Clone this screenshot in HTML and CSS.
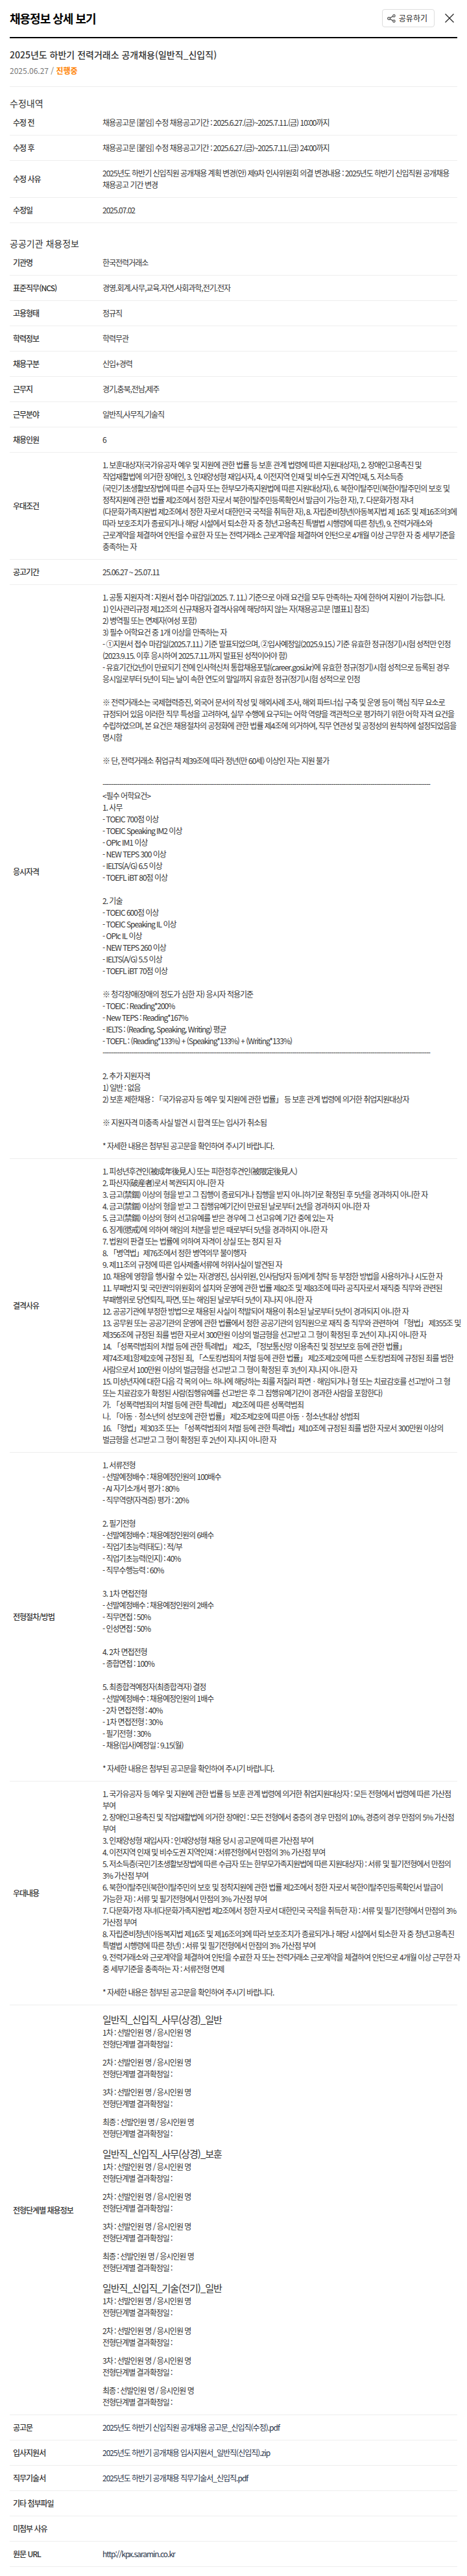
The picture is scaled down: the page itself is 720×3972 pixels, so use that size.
FILE: index.html
```
<!DOCTYPE html>
<html lang="ko">
<head>
    <meta charset="UTF-8">
    <meta name="viewport" content="width=device-width, initial-scale=1.0">
    <title>채용정보 상세 보기</title>
    <link rel="stylesheet" href="styles.css">
</head>
<body>
    <div class="popup">
        <header class="pop-header">
            <h1>채용정보 상세 보기</h1>
            <div class="pop-btns">
                <button type="button" class="btn-share">
                    <svg width="13" height="13" viewBox="0 0 13 13" fill="none" stroke="#555" stroke-width="1.3" aria-hidden="true">
                        <circle cx="2.6" cy="6.5" r="1.9"/>
                        <circle cx="10.4" cy="2.4" r="1.7"/>
                        <circle cx="10.4" cy="10.6" r="1.7"/>
                        <path d="M4.3 5.6L8.9 3.2M4.3 7.4L8.9 9.8"/>
                    </svg>
                    공유하기
                </button>
                <button type="button" class="btn-close" aria-label="닫기">
                    <svg width="14" height="14" viewBox="0 0 14 14" fill="none" stroke="#222" stroke-width="1.3">
                        <path d="M0.5 0.5L13.5 13.5M13.5 0.5L0.5 13.5"/>
                    </svg>
                </button>
            </div>
        </header>

        <div class="job-title">
            <h2>2025년도 하반기 전력거래소 공개채용(일반직_신입직)</h2>
            <p>2025.06.27 / <strong>진행중</strong></p>
        </div>

        <section class="section">
            <h3>수정내역</h3>
            <table class="tbl">
                <tr>
                    <th scope="row">수정 전</th>
                    <td>채용공고문 [붙임] 수정 채용공고기간 : 2025.6.27.(금)~2025.7.11.(금) 10:00까지</td>
                </tr>
                <tr>
                    <th scope="row">수정 후</th>
                    <td>채용공고문 [붙임] 수정 채용공고기간 : 2025.6.27.(금)~2025.7.11.(금) 24:00까지</td>
                </tr>
                <tr>
                    <th scope="row">수정 사유</th>
                    <td>
                        <div class="text">
                        2025년도 하반기 신입직원 공개채용 계획 변경(안) 제9차 인사위원회 의결 변경내용 : 2025년도 하반기 신입직원 공개채용<br>
                        채용공고 기간 변경
                        </div>
                    </td>
                </tr>
                <tr>
                    <th scope="row">수정일</th>
                    <td>2025.07.02</td>
                </tr>
            </table>
        </section>

        <section class="section">
            <h3>공공기관 채용정보</h3>
            <table class="tbl">
                <tr>
                    <th scope="row">기관명</th>
                    <td>한국전력거래소</td>
                </tr>
                <tr>
                    <th scope="row">표준직무(NCS)</th>
                    <td>경영.회계.사무,교육.자연.사회과학,전기.전자</td>
                </tr>
                <tr>
                    <th scope="row">고용형태</th>
                    <td>정규직</td>
                </tr>
                <tr>
                    <th scope="row">학력정보</th>
                    <td>학력무관</td>
                </tr>
                <tr>
                    <th scope="row">채용구분</th>
                    <td>신입+경력</td>
                </tr>
                <tr>
                    <th scope="row">근무지</th>
                    <td>경기,충북,전남,제주</td>
                </tr>
                <tr>
                    <th scope="row">근무분야</th>
                    <td>일반직,사무직,기술직</td>
                </tr>
                <tr>
                    <th scope="row">채용인원</th>
                    <td>6</td>
                </tr>
                <tr>
                    <th scope="row">우대조건</th>
                    <td>
                        <div class="text">
                        1. 보훈대상자(국가유공자 예우 및 지원에 관한 법률 등 보훈 관계 법령에 따른 지원대상자), 2. 장애인고용촉진 및<br>
                        직업재활법에 의거한 장애인, 3. 인재양성형 재입사자, 4. 이전지역 인재 및 비수도권 지역인재, 5. 저소득층<br>
                        (국민기초생활보장법에 따른 수급자 또는 한부모가족지원법에 따른 지원대상자), 6. 북한이탈주민(북한이탈주민의 보호 및<br>
                        정착지원에 관한 법률 제2조에서 정한 자로서 북한이탈주민등록확인서 발급이 가능한 자), 7. 다문화가정 자녀<br>
                        (다문화가족지원법 제2조에서 정한 자로서 대한민국 국적을 취득한 자), 8. 자립준비청년(아동복지법 제 16조 및 제16조의3에<br>
                        따라 보호조치가 종료되거나 해당 시설에서 퇴소한 자 중 청년고용촉진 특별법 시행령에 따른 청년), 9. 전력거래소와<br>
                        근로계약을 체결하여 인턴을 수료한 자 또는 전력거래소 근로계약을 체결하여 인턴으로 4개월 이상 근무한 자 중 세부기준을<br>
                        충족하는 자
                        </div>
                    </td>
                </tr>
                <tr>
                    <th scope="row">공고기간</th>
                    <td>25.06.27 ~ 25.07.11</td>
                </tr>
                <tr>
                    <th scope="row">응시자격</th>
                    <td>
                        <div class="text">
                        1. 공통 지원자격 : 지원서 접수 마감일(2025. 7. 11.) 기준으로 아래 요건을 모두 만족하는 자에 한하여 지원이 가능합니다.<br>
                        1) 인사관리규정 제12조의 신규채용자 결격사유에 해당하지 않는 자(채용공고문 [별표1] 참조)<br>
                        2) 병역필 또는 면제자(여성 포함)<br>
                        3) 필수 어학요건 중 1개 이상을 만족하는 자<br>
                        - ①지원서 접수 마감일(2025.7.11.) 기준 발표되었으며, ②입사예정일(2025.9.15.) 기준 유효한 정규(정기)시험 성적만 인정<br>
                        (2023.9.15. 이후 응시하여 2025.7.11.까지 발표된 성적이어야 함)<br>
                        - 유효기간(2년)이 만료되기 전에 인사혁신처 통합채용포털(career.gosi.kr)에 유효한 정규(정기)시험 성적으로 등록된 경우<br>
                        응시일로부터 5년이 되는 날이 속한 연도의 말일까지 유효한 정규(정기)시험 성적으로 인정<br>
                        <br>
                        ※ 전력거래소는 국제협력증진, 외국어 문서의 작성 및 해외사례 조사, 해외 파트너십 구축 및 운영 등이 핵심 직무 요소로<br>
                        규정되어 있음 이러한 직무 특성을 고려하여, 실무 수행에 요구되는 어학 역량을 객관적으로 평가하기 위한 어학 자격 요건을<br>
                        수립하였으며, 본 요건은 채용절차의 공정화에 관한 법률 제4조에 의거하여, 직무 연관성 및 공정성의 원칙하에 설정되었음을<br>
                        명시함<br>
                        <br>
                        ※ 단, 전력거래소 취업규칙 제39조에 따라 정년(만 60세) 이상인 자는 지원 불가<br>
                        <br>
                        ---------------------------------------------------------------------------------------------------------------------------------------------------------------<br>
                        &lt;필수 어학요건&gt;<br>
                        1. 사무<br>
                        - TOEIC 700점 이상<br>
                        - TOEIC Speaking IM2 이상<br>
                        - OPIc IM1 이상<br>
                        - NEW TEPS 300 이상<br>
                        - IELTS(A/G) 6.5 이상<br>
                        - TOEFL iBT 80점 이상<br>
                        <br>
                        2. 기술<br>
                        - TOEIC 600점 이상<br>
                        - TOEIC Speaking IL 이상<br>
                        - OPIc IL 이상<br>
                        - NEW TEPS 260 이상<br>
                        - IELTS(A/G) 5.5 이상<br>
                        - TOEFL iBT 70점 이상<br>
                        <br>
                        ※ 청각장애(장애의 정도가 심한 자) 응시자 적용기준<br>
                        - TOEIC : Reading*200%<br>
                        - New TEPS : Reading*167%<br>
                        - IELTS : (Reading, Speaking, Writing) 평균<br>
                        - TOEFL : (Reading*133%) + (Speaking*133%) + (Writing*133%)<br>
                        ---------------------------------------------------------------------------------------------------------------------------------------------------------------<br>
                        <br>
                        2. 추가 지원자격<br>
                        1) 일반 : 없음<br>
                        2) 보훈 제한채용 : 「국가유공자 등 예우 및 지원에 관한 법률」 등 보훈 관계 법령에 의거한 취업지원대상자<br>
                        <br>
                        ※ 지원자격 미충족 사실 발견 시 합격 또는 입사가 취소됨<br>
                        <br>
                        * 자세한 내용은 첨부된 공고문을 확인하여 주시기 바랍니다.
                        </div>
                    </td>
                </tr>
                <tr>
                    <th scope="row">결격사유</th>
                    <td>
                        <div class="text">
                        1. 피성년후견인(被成年後見人) 또는 피한정후견인(被限定後見人)<br>
                        2. 파산자(破産者)로서 복권되지 아니한 자<br>
                        3. 금고(禁錮) 이상의 형을 받고 그 집행이 종료되거나 집행을 받지 아니하기로 확정된 후 5년을 경과하지 아니한 자<br>
                        4. 금고(禁錮) 이상의 형을 받고 그 집행유예기간이 만료된 날로부터 2년을 경과하지 아니한 자<br>
                        5. 금고(禁錮) 이상의 형의 선고유예를 받은 경우에 그 선고유예 기간 중에 있는 자<br>
                        6. 징계(懲戒)에 의하여 해임의 처분을 받은 때로부터 5년을 경과하지 아니한 자<br>
                        7. 법원의 판결 또는 법률에 의하여 자격이 상실 또는 정지 된 자<br>
                        8. 「병역법」제76조에서 정한 병역의무 불이행자<br>
                        9. 제11조의 규정에 따른 입사제출서류에 허위사실이 발견된 자<br>
                        10. 채용에 영향을 행사할 수 있는 자(경영진, 심사위원, 인사담당자 등)에게 청탁 등 부정한 방법을 사용하거나 시도한 자<br>
                        11. 부패방지 및 국민권익위원회의 설치와 운영에 관한 법률 제82조 및 제83조에 따라 공직자로서 재직중 직무와 관련된<br>
                        부패행위로 당연퇴직, 파면, 또는 해임된 날로부터 5년이 지나지 아니한 자<br>
                        12. 공공기관에 부정한 방법으로 채용된 사실이 적발되어 채용이 취소된 날로부터 5년이 경과되지 아니한 자<br>
                        13. 공무원 또는 공공기관의 운영에 관한 법률에서 정한 공공기관의 임직원으로 재직 중 직무와 관련하여 「형법」 제355조 및<br>
                        제356조에 규정된 죄를 범한 자로서 300만원 이상의 벌금형을 선고받고 그 형이 확정된 후 2년이 지나지 아니한 자<br>
                        14. 「성폭력범죄의 처벌 등에 관한 특례법」 제2조, 「정보통신망 이용촉진 및 정보보호 등에 관한 법률」<br>
                        제74조제1항제2호에 규정된 죄, 「스토킹범죄의 처벌 등에 관한 법률」 제2조제2호에 따른 스토킹범죄에 규정된 죄를 범한<br>
                        사람으로서 100만원 이상의 벌금형을 선고받고 그 형이 확정된 후 3년이 지나지 아니한 자<br>
                        15. 미성년자에 대한 다음 각 목의 어느 하나에 해당하는 죄를 저질러 파면ㆍ해임되거나 형 또는 치료감호를 선고받아 그 형<br>
                        또는 치료감호가 확정된 사람(집행유예를 선고받은 후 그 집행유예기간이 경과한 사람을 포함한다)<br>
                        가. 「성폭력범죄의 처벌 등에 관한 특례법」 제2조에 따른 성폭력범죄<br>
                        나. 「아동ㆍ청소년의 성보호에 관한 법률」 제2조제2호에 따른 아동ㆍ청소년대상 성범죄<br>
                        16. 「형법」제303조 또는 「성폭력범죄의 처벌 등에 관한 특례법」제10조에 규정된 죄를 범한 자로서 300만원 이상의<br>
                        벌금형을 선고받고 그 형이 확정된 후 2년이 지나지 아니한 자
                        </div>
                    </td>
                </tr>
                <tr>
                    <th scope="row">전형절차/방법</th>
                    <td>
                        1. 서류전형<br>
                        - 선발예정배수 : 채용예정인원의 100배수<br>
                        - AI 자기소개서 평가 : 80%<br>
                        - 직무역량(자격증) 평가 : 20%<br>
                        <br>
                        2. 필기전형<br>
                        - 선발예정배수 : 채용예정인원의 6배수<br>
                        - 직업기초능력(태도) : 적/부<br>
                        - 직업기초능력(인지) : 40%<br>
                        - 직무수행능력 : 60%<br>
                        <br>
                        3. 1차 면접전형<br>
                        - 선발예정배수 : 채용예정인원의 2배수<br>
                        - 직무면접 : 50%<br>
                        - 인성면접 : 50%<br>
                        <br>
                        4. 2차 면접전형<br>
                        - 종합면접 : 100%<br>
                        <br>
                        5. 최종합격예정자(최종합격자) 결정<br>
                        - 선발예정배수 : 채용예정인원의 1배수<br>
                        - 2차 면접전형 : 40%<br>
                        - 1차 면접전형 : 30%<br>
                        - 필기전형 : 30%<br>
                        - 채용(입사)예정일 : 9.15(월)<br>
                        <br>
                        * 자세한 내용은 첨부된 공고문을 확인하여 주시기 바랍니다.
                    </td>
                </tr>
                <tr>
                    <th scope="row">우대내용</th>
                    <td>
                        <div class="text">
                        1. 국가유공자 등 예우 및 지원에 관한 법률 등 보훈 관계 법령에 의거한 취업지원대상자 : 모든 전형에서 법령에 따른 가산점<br>
                        부여<br>
                        2. 장애인고용촉진 및 직업재활법에 의거한 장애인 : 모든 전형에서 중증의 경우 만점의 10%, 경증의 경우 만점의 5% 가산점<br>
                        부여<br>
                        3. 인재양성형 재입사자 : 인재양성형 채용 당시 공고문에 따른 가산점 부여<br>
                        4. 이전지역 인재 및 비수도권 지역인재 : 서류전형에서 만점의 3% 가산점 부여<br>
                        5. 저소득층(국민기초생활보장법에 따른 수급자 또는 한부모가족지원법에 따른 지원대상자) : 서류 및 필기전형에서 만점의<br>
                        3% 가산점 부여<br>
                        6. 북한이탈주민(북한이탈주민의 보호 및 정착지원에 관한 법률 제2조에서 정한 자로서 북한이탈주민등록확인서 발급이<br>
                        가능한 자) : 서류 및 필기전형에서 만점의 3% 가산점 부여<br>
                        7. 다문화가정 자녀(다문화가족지원법 제2조에서 정한 자로서 대한민국 국적을 취득한 자) : 서류 및 필기전형에서 만점의 3%<br>
                        가산점 부여<br>
                        8. 자립준비청년(아동복지법 제16조 및 제16조의3에 따라 보호조치가 종료되거나 해당 시설에서 퇴소한 자 중 청년고용촉진<br>
                        특별법 시행령에 따른 청년) : 서류 및 필기전형에서 만점의 3% 가산점 부여<br>
                        9. 전력거래소와 근로계약을 체결하여 인턴을 수료한 자 또는 전력거래소 근로계약을 체결하여 인턴으로 4개월 이상 근무한 자<br>
                        중 세부기준을 충족하는 자 : 서류전형 면제<br>
                        <br>
                        * 자세한 내용은 첨부된 공고문을 확인하여 주시기 바랍니다.
                        </div>
                    </td>
                </tr>
                <tr>
                    <th scope="row">전형단계별 채용정보</th>
                    <td class="steps">
                        <h4>일반직_신입직_사무(상경)_일반</h4>
                        <p>1차 : 선발인원 명 / 응시인원 명<br>전형단계별 결과확정일 :</p>
                        <p>2차 : 선발인원 명 / 응시인원 명<br>전형단계별 결과확정일 :</p>
                        <p>3차 : 선발인원 명 / 응시인원 명<br>전형단계별 결과확정일 :</p>
                        <p>최종 : 선발인원 명 / 응시인원 명<br>전형단계별 결과확정일 :</p>
                        <h4>일반직_신입직_사무(상경)_보훈</h4>
                        <p>1차 : 선발인원 명 / 응시인원 명<br>전형단계별 결과확정일 :</p>
                        <p>2차 : 선발인원 명 / 응시인원 명<br>전형단계별 결과확정일 :</p>
                        <p>3차 : 선발인원 명 / 응시인원 명<br>전형단계별 결과확정일 :</p>
                        <p>최종 : 선발인원 명 / 응시인원 명<br>전형단계별 결과확정일 :</p>
                        <h4>일반직_신입직_기술(전기)_일반</h4>
                        <p>1차 : 선발인원 명 / 응시인원 명<br>전형단계별 결과확정일 :</p>
                        <p>2차 : 선발인원 명 / 응시인원 명<br>전형단계별 결과확정일 :</p>
                        <p>3차 : 선발인원 명 / 응시인원 명<br>전형단계별 결과확정일 :</p>
                        <p>최종 : 선발인원 명 / 응시인원 명<br>전형단계별 결과확정일 :</p>
                    </td>
                </tr>
                <tr>
                    <th scope="row">공고문</th>
                    <td><a href="#">2025년도 하반기 신입직원 공개채용 공고문_신입직(수정).pdf</a></td>
                </tr>
                <tr>
                    <th scope="row">입사지원서</th>
                    <td><a href="#">2025년도 하반기 공개채용 입사지원서_일반직(신입직).zip</a></td>
                </tr>
                <tr>
                    <th scope="row">직무기술서</th>
                    <td><a href="#">2025년도 하반기 공개채용 직무기술서_신입직.pdf</a></td>
                </tr>
                <tr>
                    <th scope="row">기타 첨부파일</th>
                    <td></td>
                </tr>
                <tr>
                    <th scope="row">미첨부 사유</th>
                    <td></td>
                </tr>
                <tr>
                    <th scope="row">원문 URL</th>
                    <td><a href="http://kpx.saramin.co.kr">http://kpx.saramin.co.kr</a></td>
                </tr>
            </table>
        </section>
    </div>
</body>
</html>
```
FILE: styles.css
```
* {
    margin: 0;
    padding: 0;
    box-sizing: border-box;
}

body {
    background: #fff;
    color: #333;
    font-family: "Noto Sans CJK KR", "Noto Sans", sans-serif;
    font-size: 12px;
    line-height: 18px;
    word-break: keep-all;
}

button {
    font-family: inherit;
    font-size: 12px;
    line-height: 18px;
    background: none;
    cursor: pointer;
}

a {
    color: #263248;
    text-decoration: none;
}

.popup {
    padding: 0 15px 14px;
}

/* header */
.pop-header {
    display: flex;
    justify-content: space-between;
    align-items: center;
    padding: 14px 0 15px;
    border-bottom: 2px solid #000;
}

.pop-header h1 {
    color: #000;
    font-size: 18px;
    line-height: 28px;
    font-weight: 700;
    letter-spacing: -1px;
}

.pop-btns {
    display: flex;
    align-items: center;
    gap: 11px;
}

.btn-share {
    display: flex;
    align-items: center;
    gap: 5px;
    height: 28px;
    padding: 0 10px 0 7px;
    border: 1px solid #ddd;
    border-radius: 4px;
    color: #222;
}

.btn-close {
    display: flex;
    padding: 5px;
    border: 0;
}

/* job title */
.job-title {
    padding: 15px 0;
    border-bottom: 1px solid #eee;
}

.job-title h2 {
    font-size: 14px;
    line-height: 21px;
    font-weight: 500;
    margin-bottom: 5px;
}

.job-title p {
    color: #777;
}

.job-title strong {
    color: #ff7f00;
    font-weight: 700;
}

/* sections */
.section {
    padding-top: 15px;
}

.section + .section {
    padding-top: 21px;
}

.section h3 {
    font-size: 14px;
    line-height: 21px;
    font-weight: 400;
}

.tbl {
    width: 100%;
    border-collapse: separate;
    border-spacing: 0;
    table-layout: fixed;
    letter-spacing: -1px;
}

.tbl th,
.tbl td {
    padding: 10px 0 10px 5px;
    border-bottom: 1px solid #eee;
    text-align: left;
    vertical-align: middle;
}

.tbl th {
    width: 20%;
    font-weight: 500;
}

/* long text may run a little into the side padding */
.text {
    margin-right: -10px;
}

.steps h4 {
    font-size: 15px;
    line-height: 23px;
    font-weight: 400;
}

.steps p {
    margin-bottom: 10px;
}

.steps p:last-child {
    margin-bottom: 0;
}
```
